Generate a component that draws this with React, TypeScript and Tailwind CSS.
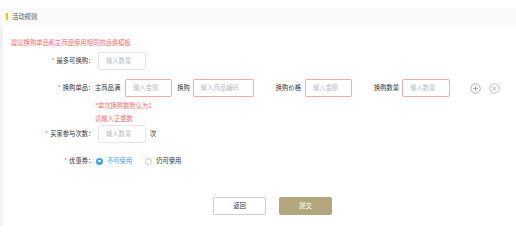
import React from "react";

const font = { fontFamily: '"Noto Sans CJK SC", "Noto Sans", sans-serif' };

function Box({ w, text, red }: { w: string; text: string; red?: boolean }) {
  return (
    <div
      className={`h-[18px] ${w} rounded-[2px] border ${red ? "border-[#f7a8a8]" : "border-[#e4e7ed]"} bg-white flex items-center pl-[7px] text-[6.3px] text-[#b8bcc4]`}
    >
      {text}
    </div>
  );
}

function Label({ text }: { text: string }) {
  return (
    <div className="w-[92px] shrink-0 flex justify-end items-center text-[6.3px] text-[#333] pr-[1px]">
      <span className="text-[#f56c6c] mr-[2px]">*</span>
      <span>{text}</span>
      <span className="w-[6px]">：</span>
    </div>
  );
}

export default function App() {
  return (
    <div className="w-[516px] h-[226px] bg-white flex flex-col overflow-hidden" style={font}>
      <div className="h-[8px] shrink-0" />
      <div className="h-[17px] shrink-0 bg-[#fafafa] flex items-center pl-[6px]">
        <div className="w-[2px] h-[7px] bg-[#f7c600] mr-[4px]" />
        <span className="text-[6.3px] text-[#555]">活动规则</span>
      </div>
      <div className="flex flex-1">
        <div className="w-[3px] bg-[#f2f2f2] shrink-0" />
        <div className="flex-1 flex flex-col">
          <div className="pt-[14px] pl-[8px] h-[22px] text-[6.3px] leading-[8px] text-[#f56c6c]">
            建议换购单品和主商品使用相同的运费模板
          </div>
          <div className="flex items-center h-[18px] mt-[5px]">
            <Label text="最多可换购" />
            <div className="ml-[3px]">
              <Box w="w-[48px]" text="输入数量" />
            </div>
          </div>
          <div className="flex items-center h-[18px] mt-[9px]">
            <Label text="换购单品" />
            <span className="text-[6.3px] text-[#333]">主商品满</span>
            <div className="ml-[5px]">
              <Box w="w-[47px]" text="输入金额" red />
            </div>
            <span className="ml-[5px] text-[6.3px] text-[#333]">换购</span>
            <div className="ml-[3px]">
              <Box w="w-[61px]" text="输入商品编码" red />
            </div>
            <span className="ml-[22px] text-[6.3px] text-[#333]">换购价格</span>
            <div className="ml-[4px]">
              <Box w="w-[47px]" text="输入金额" red />
            </div>
            <span className="ml-[22px] text-[6.3px] text-[#333]">换购数量</span>
            <div className="ml-[3px]">
              <Box w="w-[48px]" text="输入数量" red />
            </div>
            <svg className="ml-[20px]" width="11" height="11" viewBox="0 0 11 11">
              <circle cx="5.5" cy="5.5" r="4.7" fill="none" stroke="#9a9a9a" strokeWidth="0.8" />
              <path d="M5.5 3v5M3 5.5h5" stroke="#9a9a9a" strokeWidth="0.8" />
            </svg>
            <svg className="ml-[8px]" width="11" height="11" viewBox="0 0 11 11">
              <circle cx="5.5" cy="5.5" r="4.7" fill="none" stroke="#b0b0b0" strokeWidth="0.8" />
              <path d="M3.8 3.8l3.4 3.4M7.2 3.8l-3.4 3.4" stroke="#b0b0b0" strokeWidth="0.8" />
            </svg>
          </div>
          <div className="pl-[92px] mt-[5px] h-[8px] text-[6.3px] leading-[8px] text-[#f56c6c]">
            *单次换购数默认为1
          </div>
          <div className="pl-[92px] mt-[5px] h-[8px] text-[6.3px] leading-[8px] text-[#f56c6c]">
            请输入正整数
          </div>
          <div className="flex items-center h-[18px] mt-[2px]">
            <Label text="买家参与次数" />
            <div className="ml-[3px]">
              <Box w="w-[48px]" text="输入数量" />
            </div>
            <span className="ml-[4px] text-[6.3px] text-[#333]">次</span>
          </div>
          <div className="flex items-center h-[10px] mt-[13px]">
            <Label text="优惠券" />
            <div className="ml-[1px] w-[7px] h-[7px] rounded-full bg-[#409eff] flex items-center justify-center">
              <div className="w-[2.5px] h-[2.5px] rounded-full bg-white" />
            </div>
            <span className="ml-[4px] text-[6.3px] text-[#409eff]">不可使用</span>
            <div className="ml-[13px] w-[7px] h-[7px] rounded-full border border-[#c8c8c8] bg-white" />
            <span className="ml-[4px] text-[6.3px] text-[#333]">仍可使用</span>
          </div>
          <div className="flex mt-[31px] ml-[210px] gap-[13px]">
            <div className="w-[53px] h-[18px] rounded-[2px] border border-[#d0d0d0] bg-white flex items-center justify-center text-[6.3px] text-[#333]">
              返回
            </div>
            <div className="w-[53px] h-[18px] rounded-[2px] bg-[#b3a67c] flex items-center justify-center text-[6.3px] text-white">
              提交
            </div>
          </div>
        </div>
      </div>
    </div>
  );
}
